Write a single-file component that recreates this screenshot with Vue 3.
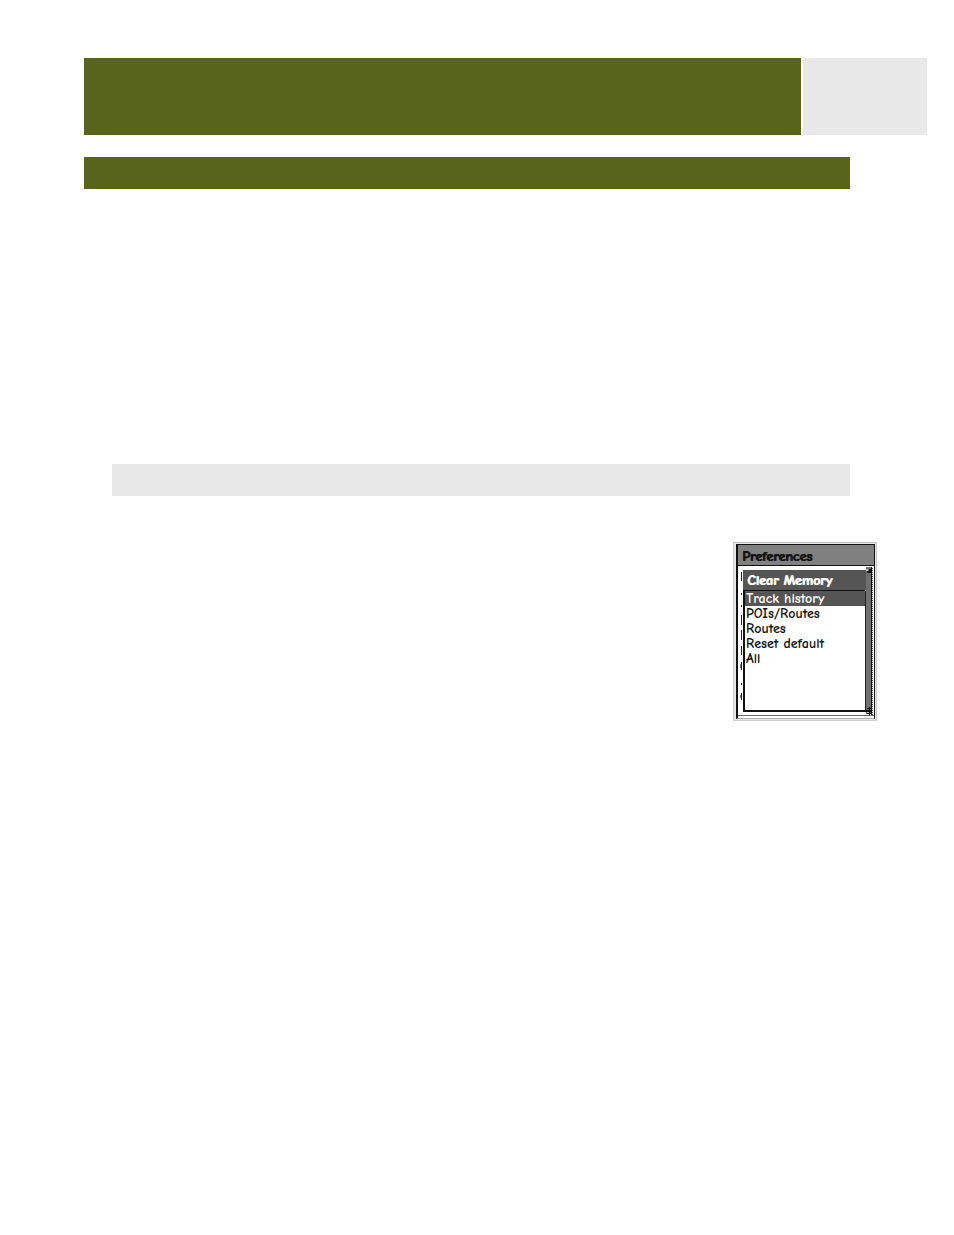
<script setup>
import { ref } from 'vue'

const options = ['Track history', 'POIs/Routes', 'Routes', 'Reset default', 'All']

const selected = ref('Track history')

const selectOption = (option) => {
  selected.value = option
}
</script>

<template>
  <main class="page">
    <header class="page-header">
      <div class="header-title"></div>
      <div class="header-number"></div>
    </header>
    <div class="section-bar"></div>
    <div class="subsection-bar"></div>

    <section class="device">
      <div class="screen">
        <h1 class="screen-title">Preferences</h1>
        <div class="screen-body">
          <svg class="backdrop" width="4" height="144" viewBox="0 0 4 144" aria-hidden="true">
            <path
              d="M3.5 3v9M3.5 24v2M3.5 36v2M3.5 46v10M3.5 61v10M3.5 77v9M3.5 93v8M3.5 114v2M3.5 124v7"
              stroke="#222"
              stroke-width="1"
            />
            <path d="M2.5 95v4M2.5 126v3" stroke="#777" stroke-width="1" />
          </svg>
          <div class="menu">
            <h2 class="menu-title">Clear Memory</h2>
            <ul class="menu-list">
              <li v-for="option in options" :key="option">
                <button
                  type="button"
                  class="menu-item"
                  :class="{ selected: option === selected }"
                  @click="selectOption(option)"
                >{{ option }}</button>
              </li>
            </ul>
          </div>
          <svg class="scrollbar" width="9" height="148" viewBox="0 0 9 148" aria-hidden="true">
            <path d="M0 24h1v121h-1z" fill="#222" />
            <path d="M0 3h1v20h-1z" fill="#555" />
            <path d="M1 0h5v147h-5z" fill="#707070" />
            <path d="M6 0h1v148h-1z" fill="#111" />
            <path d="M7.5 1v147" stroke="#555" stroke-width="1" stroke-dasharray="1 1" />
            <path d="M4 2h2v2h-2zM2 4h4v2h-4z" fill="#111" />
            <path d="M2 141.5h5M2 146.5h4M4.5 140v8" stroke="#111" stroke-width="1" />
            <path d="M0 143h7v2h-7z" fill="#111" />
            <path d="M1 2h2v2h-2zM2 145h2v1h-2z" fill="#bbb" />
          </svg>
        </div>
      </div>
    </section>
  </main>
</template>

<style>
body {
  margin: 0;
  background: #fff;
}
</style>

<style scoped>
.page {
  box-sizing: border-box;
  min-height: 100vh;
  padding: 58px 27px 0 84px;
  display: flex;
  flex-direction: column;
}

.page-header {
  display: flex;
  gap: 2px;
  height: 77px;
}

.header-title {
  flex: 1;
  background: #58641c;
}

.header-number {
  width: 124px;
  background: #e8e8e8;
}

.section-bar {
  height: 32px;
  margin: 22px 77px 0 0;
  background: #58641c;
}

.subsection-bar {
  height: 32px;
  margin: 275px 77px 0 28px;
  background: #e8e8e8;
}

.device {
  box-sizing: border-box;
  width: 144px;
  align-self: flex-end;
  margin: 46px 50px 0 0;
  padding: 1px 1px 1px 2px;
  border: 1px solid #ccc;
  border-top-color: #bbb;
  background: #e8e8e8;
  font-family: "Comic Sans MS", "Comic Neue", Lato, sans-serif;
}

.screen {
  padding-bottom: 2px;
  border: solid #111;
  border-width: 1px 1px 0 2px;
  border-bottom: 1px solid #aaa;
  background: #fff;
}

.screen-title {
  margin: 0;
  padding: 3px 0 0 4px;
  border-bottom: 1px solid #111;
  background: #808080;
  color: #111;
  font-size: 14px;
  font-weight: 900;
  line-height: 17px;
  text-shadow: 1px 0 #111;
}

.screen-body {
  display: flex;
  padding-top: 1px;
  border-bottom: 1px solid #666;
}

.backdrop {
  flex: none;
  margin-top: 2px;
}

.menu {
  flex: 1;
  display: flex;
  flex-direction: column;
  margin: 3px 0 3px 1px;
}

.menu-title {
  margin: 0;
  padding: 1px 0 0 4px;
  background: #555;
  color: #fff;
  font-size: 14px;
  font-weight: 900;
  line-height: 19px;
  text-shadow: 1px 0 #fff;
}

.menu-list {
  flex: 1;
  margin: 0;
  padding: 0;
  border: solid #111;
  border-width: 1px 0 2px 2px;
  list-style: none;
}

.menu-item {
  display: block;
  width: 100%;
  margin: 0;
  padding: 0 0 0 1px;
  border: 0;
  background: #fff;
  color: #111;
  font-family: inherit;
  font-size: 14px;
  font-weight: 700;
  line-height: 15px;
  text-align: left;
  white-space: nowrap;
  cursor: pointer;
}

.menu-item.selected {
  background: #555;
  color: #fff;
}

.scrollbar {
  flex: none;
}
</style>
